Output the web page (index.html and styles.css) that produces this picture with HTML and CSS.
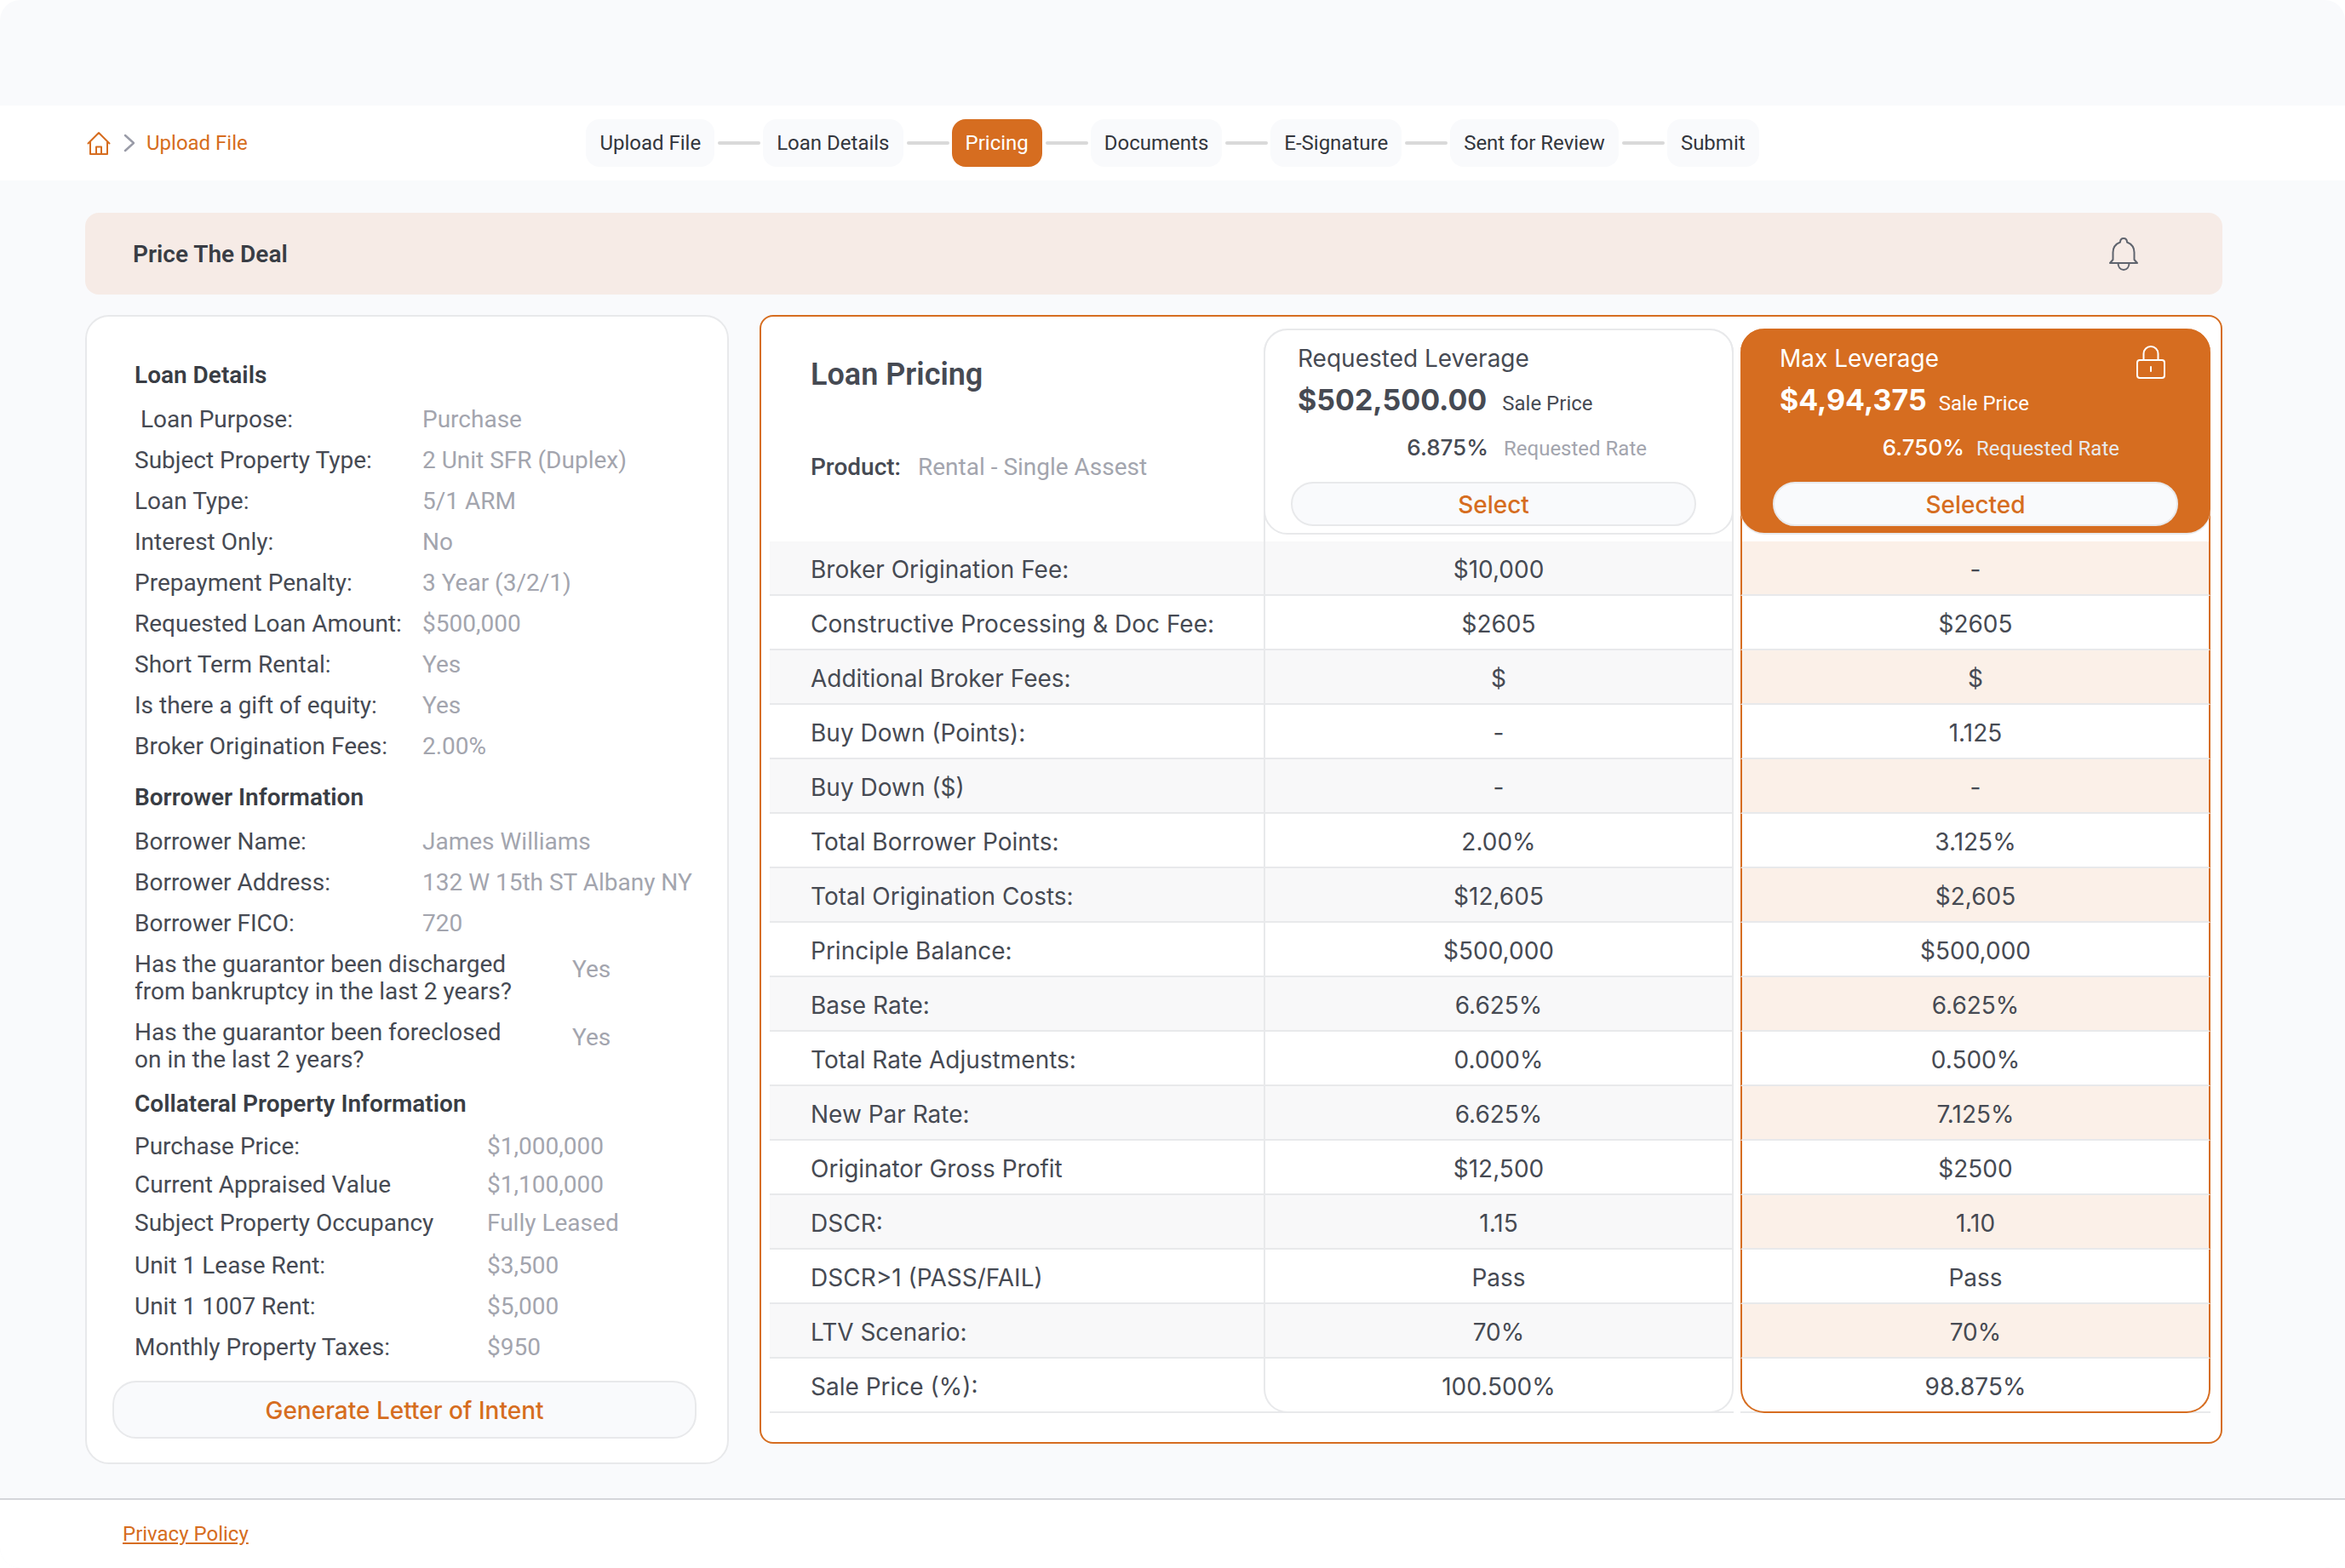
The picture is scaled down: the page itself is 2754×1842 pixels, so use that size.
FILE: index.html
```html
<!DOCTYPE html>
<html lang="en">
<head>
    <meta charset="UTF-8">
    <meta name="viewport" content="width=device-width, initial-scale=1.0">
    <title>Price The Deal</title>
    <link rel="stylesheet" href="styles.css">
</head>
<body>
    <div class="topbar"></div>

    <header class="header">
        <nav class="breadcrumb" aria-label="Breadcrumb">
            <a href="#" class="home" aria-label="Home">
                <svg width="28" height="28" viewBox="0 0 28 28" fill="none" stroke="currentColor" stroke-width="2" stroke-linecap="round" stroke-linejoin="round">
                    <path d="M1.5 14.5 14 2l12.500 12.500M4 12.500V27h20V12.500M11 27v-8.500h6V27"/>
                </svg>
            </a>
            <svg class="chevron" width="14" height="24" viewBox="0 0 14 24" fill="none" stroke="currentColor" stroke-width="2.500" stroke-linecap="round" stroke-linejoin="round">
                <path d="M3 3l10 9-10 9"/>
            </svg>
            <a href="#">Upload File</a>
        </nav>
        <ol class="steps">
            <li><button type="button">Upload File</button></li>
            <li><button type="button">Loan Details</button></li>
            <li><button type="button" class="active" aria-current="step">Pricing</button></li>
            <li><button type="button">Documents</button></li>
            <li><button type="button">E-Signature</button></li>
            <li><button type="button">Sent for Review</button></li>
            <li><button type="button">Submit</button></li>
        </ol>
    </header>

    <main class="content">
        <div class="banner">
            <h1>Price The Deal</h1>
            <button type="button" class="bell" aria-label="Notifications">
                <svg width="36" height="40" viewBox="0 0 36 40" fill="none" stroke="currentColor" stroke-width="2" stroke-linecap="round" stroke-linejoin="round">
                    <path d="M14 6.500C14 3.500 15.500 2 18 2s4 1.500 4 4.500c5 2 8.500 6 8.500 12V27l3.500 4H2l3.500-4v-8.500c0-6 3.500-10 8.500-12z"/>
                    <path d="M11.500 31c0 4.500 2.500 8 6.500 8s6.500-3.500 6.500-8"/>
                </svg>
            </button>
        </div>

        <div class="columns">
            <!-- Loan summary -->
            <aside class="summary">
                <section>
                    <h2>Loan Details</h2>
                    <dl>
                        <dt>&nbsp;Loan Purpose:</dt><dd>Purchase</dd>
                        <dt>Subject Property Type:</dt><dd>2 Unit SFR (Duplex)</dd>
                        <dt>Loan Type:</dt><dd>5/1 ARM</dd>
                        <dt>Interest Only:</dt><dd>No</dd>
                        <dt>Prepayment Penalty:</dt><dd>3 Year (3/2/1)</dd>
                        <dt>Requested Loan Amount:</dt><dd>$500,000</dd>
                        <dt>Short Term Rental:</dt><dd>Yes</dd>
                        <dt>Is there a gift of equity:</dt><dd>Yes</dd>
                        <dt>Broker Origination Fees:</dt><dd>2.00%</dd>
                    </dl>
                </section>
                <section>
                    <h2>Borrower Information</h2>
                    <dl>
                        <dt>Borrower Name:</dt><dd>James Williams</dd>
                        <dt>Borrower Address:</dt><dd>132 W 15th ST Albany NY</dd>
                        <dt>Borrower FICO:</dt><dd>720</dd>
                    </dl>
                    <dl class="questions">
                        <dt>Has the guarantor been discharged<br>from bankruptcy in the last 2 years?</dt><dd>Yes</dd>
                        <dt>Has the guarantor been foreclosed<br>on in the last 2 years?</dt><dd>Yes</dd>
                    </dl>
                </section>
                <section class="collateral">
                    <h2>Collateral Property Information</h2>
                    <dl class="property">
                        <dt>Purchase Price:</dt><dd>$1,000,000</dd>
                        <dt>Current Appraised Value</dt><dd>$1,100,000</dd>
                        <dt>Subject Property Occupancy</dt><dd>Fully Leased</dd>
                    </dl>
                    <dl class="rents">
                        <dt>Unit 1 Lease Rent:</dt><dd>$3,500</dd>
                        <dt>Unit 1 1007 Rent:</dt><dd>$5,000</dd>
                        <dt>Monthly Property Taxes:</dt><dd>$950</dd>
                    </dl>
                </section>
                <button type="button" class="pill generate">Generate Letter of Intent</button>
            </aside>

            <!-- Pricing comparison -->
            <section class="pricing">
                <table>
                    <colgroup>
                        <col>
                        <col class="col-offer">
                        <col class="col-gap">
                        <col class="col-offer">
                    </colgroup>
                    <thead>
                        <tr>
                            <td class="intro">
                                <h2>Loan Pricing</h2>
                                <p><strong>Product:</strong> <span>Rental - Single Assest</span></p>
                            </td>
                            <th scope="col" class="requested">
                                <div class="offer">
                                    <div class="offer-name">Requested Leverage</div>
                                    <div class="offer-price"><b>$502,500.00</b> <span>Sale Price</span></div>
                                    <div class="offer-rate"><b>6.875%</b> <span>Requested Rate</span></div>
                                    <button type="button" class="pill">Select</button>
                                </div>
                            </th>
                            <td></td>
                            <th scope="col" class="max">
                                <div class="offer selected">
                                    <svg class="lock" width="36" height="40" viewBox="0 0 36 40" fill="none" stroke="currentColor" stroke-width="2" stroke-linecap="round" stroke-linejoin="round">
                                        <rect x="2" y="17" width="32" height="21" rx="3"/>
                                        <path d="M9.500 17V9.500a8.500 8.500 0 0 1 17 0V17M18 25v5"/>
                                    </svg>
                                    <div class="offer-name">Max Leverage</div>
                                    <div class="offer-price"><b>$4,94,375</b> <span>Sale Price</span></div>
                                    <div class="offer-rate"><b>6.750%</b> <span>Requested Rate</span></div>
                                    <button type="button" class="pill">Selected</button>
                                </div>
                            </th>
                        </tr>
                    </thead>
                    <tbody>
                        <tr><th scope="row">Broker Origination Fee:</th><td class="requested">$10,000</td><td class="gap"></td><td class="max">-</td></tr>
                        <tr><th scope="row">Constructive Processing &amp; Doc Fee:</th><td class="requested">$2605</td><td class="gap"></td><td class="max">$2605</td></tr>
                        <tr><th scope="row">Additional Broker Fees:</th><td class="requested">$</td><td class="gap"></td><td class="max">$</td></tr>
                        <tr><th scope="row">Buy Down (Points):</th><td class="requested">-</td><td class="gap"></td><td class="max">1.125</td></tr>
                        <tr><th scope="row">Buy Down ($)</th><td class="requested">-</td><td class="gap"></td><td class="max">-</td></tr>
                        <tr><th scope="row">Total Borrower Points:</th><td class="requested">2.00%</td><td class="gap"></td><td class="max">3.125%</td></tr>
                        <tr><th scope="row">Total Origination Costs:</th><td class="requested">$12,605</td><td class="gap"></td><td class="max">$2,605</td></tr>
                        <tr><th scope="row">Principle Balance:</th><td class="requested">$500,000</td><td class="gap"></td><td class="max">$500,000</td></tr>
                        <tr><th scope="row">Base Rate:</th><td class="requested">6.625%</td><td class="gap"></td><td class="max">6.625%</td></tr>
                        <tr><th scope="row">Total Rate Adjustments:</th><td class="requested">0.000%</td><td class="gap"></td><td class="max">0.500%</td></tr>
                        <tr><th scope="row">New Par Rate:</th><td class="requested">6.625%</td><td class="gap"></td><td class="max">7.125%</td></tr>
                        <tr><th scope="row">Originator Gross Profit</th><td class="requested">$12,500</td><td class="gap"></td><td class="max">$2500</td></tr>
                        <tr><th scope="row">DSCR:</th><td class="requested">1.15</td><td class="gap"></td><td class="max">1.10</td></tr>
                        <tr><th scope="row">DSCR&gt;1 (PASS/FAIL)</th><td class="requested">Pass</td><td class="gap"></td><td class="max">Pass</td></tr>
                        <tr><th scope="row">LTV Scenario:</th><td class="requested">70%</td><td class="gap"></td><td class="max">70%</td></tr>
                        <tr><th scope="row">Sale Price (%):</th><td class="requested">100.500%</td><td class="gap"></td><td class="max">98.875%</td></tr>
                    </tbody>
                </table>
            </section>
        </div>
    </main>

    <footer class="footer">
        <a href="#">Privacy Policy</a>
    </footer>
</body>
</html>
```

FILE: styles.css
```css
:root {
    --orange: #d66d20;
    --ink: #464a53;
    --dark: #393d44;
    --muted: #a3a5ae;
    --line: #e8e9eb;
    --page: #f9fafc;
}
* {
    box-sizing: border-box;
}
html {
    background: #fff;
}
body {
    margin: 0;
    min-height: 100vh;
    display: flex;
    flex-direction: column;
    border-radius: 24px;
    background: var(--page);
    color: var(--ink);
    font-family: Roboto, Arial, sans-serif;
    font-size: 28px;
    line-height: 32px;
}
h1, h2, p, dl, dd, ol {
    margin: 0;
    padding: 0;
}
h1, h2 {
    font-size: 28px;
    font-weight: 600;
    color: var(--dark);
}
button {
    border: 0;
    padding: 0;
    background: none;
    color: inherit;
    font: inherit;
    cursor: pointer;
}
a {
    color: var(--orange);
}
svg {
    display: block;
}

/* Header */
.topbar {
    height: 124px;
}
.header {
    display: grid;
    grid-template-columns: 1fr auto 1fr;
    align-items: center;
    height: 88px;
    padding: 0 100px;
    background: #fff;
    font-size: 24px;
    line-height: 28px;
}
.breadcrumb {
    display: flex;
    align-items: center;
    gap: 14px;
    padding-left: 2px;
}
.breadcrumb a {
    text-decoration: none;
}
.chevron {
    color: #9a9ca8;
}
.steps {
    display: flex;
    list-style: none;
    color: #33363d;
}
.steps li {
    display: flex;
    align-items: center;
}
.steps li + li::before {
    content: "";
    width: 50px;
    height: 4px;
    margin: 0 3px 0 4px;
    border-radius: 2px;
    background: #d9d9d9;
}
.steps button {
    height: 56px;
    padding: 0 16px;
    border-radius: 16px;
    background: var(--page);
}
.steps .active {
    background: var(--orange);
    color: #fff;
}

/* Main area */
.content {
    flex: 1;
    padding: 38px 144px 40px 100px;
}
.banner {
    display: flex;
    justify-content: space-between;
    align-items: center;
    height: 96px;
    margin-bottom: 24px;
    padding: 0 98px 0 56px;
    border-radius: 16px;
    background: #f6ebe6;
}
.banner h1 {
    padding-top: 2px;
}
.bell {
    color: #5f646e;
}
.columns {
    display: grid;
    grid-template-columns: 756fr 1718fr;
    gap: 36px;
    align-items: start;
}

/* Loan summary */
.summary {
    padding: 53px 36px 28px 30px;
    border: 2px solid var(--line);
    border-radius: 28px;
    background: #fff;
}
.summary section {
    margin-bottom: 28px;
    padding-left: 26px;
}
.summary h2 {
    margin-bottom: 20px;
}
.summary dl {
    display: grid;
    grid-template-columns: 338px 1fr;
    row-gap: 16px;
}
.summary dt, .summary dd {
    white-space: nowrap;
}
.summary dd {
    color: var(--muted);
}
.summary .questions {
    grid-template-columns: 514px 1fr;
    margin-top: 16px;
}
.questions dd {
    padding-top: 6px;
}
.summary .collateral {
    margin-top: -8px;
    margin-bottom: 23px;
}
.collateral h2 {
    margin-bottom: 18px;
}
.collateral dl {
    grid-template-columns: 414px 1fr;
}
.summary .property {
    row-gap: 13px;
    margin-bottom: 18px;
}
.pill {
    display: block;
    width: 100%;
    height: 52px;
    padding-top: 2px;
    border: 2px solid var(--line);
    border-radius: 28px;
    background: var(--page);
    color: var(--orange);
    font-family: Inter, Roboto, sans-serif;
    font-size: 28px;
    font-weight: 500;
}
.generate {
    height: 68px;
}

/* Pricing comparison */
.pricing {
    padding: 14px 12px 34px 10px;
    border: 2px solid var(--orange);
    border-radius: 16px;
    background: #fff;
}
table {
    width: 100%;
    table-layout: fixed;
    isolation: isolate;
    border-collapse: separate;
    border-spacing: 0;
    font-family: Inter, Roboto, sans-serif;
    font-size: 28px;
    text-align: center;
}
.col-offer {
    width: 552px;
}
.col-gap {
    width: 8px;
}
th, td {
    padding: 0;
    font-weight: 400;
}
.intro {
    padding: 38px 0 0 48px;
    text-align: left;
    vertical-align: top;
    font-family: Roboto, Arial, sans-serif;
}
.intro h2 {
    margin-bottom: 77px;
    font-size: 36px;
    color: var(--ink);
}
.intro p {
    display: flex;
    gap: 20px;
}
.intro strong {
    font-weight: 500;
}
.intro span {
    color: var(--muted);
}
.requested, .max {
    border: 0 solid var(--line);
    border-width: 0 2px;
}
.max {
    border-color: var(--orange);
}
thead .requested, thead .max {
    padding-bottom: 8px;
    border-radius: 28px 28px 0 0;
}
.offer {
    position: relative;
    height: 242px;
    margin: 0 -2px;
    padding: 17px 42px 8px 30px;
    border: 2px solid var(--line);
    border-radius: 28px;
    text-align: left;
}
.offer > div {
    padding-left: 8px;
}
.offer span {
    font-family: Roboto, Arial, sans-serif;
    font-size: 24px;
}
.offer-name {
    margin-bottom: 17px;
}
.offer-price, .offer-rate {
    display: flex;
    align-items: baseline;
    gap: 18px;
}
.offer-price b {
    font-size: 34px;
}
.offer-rate {
    margin: 20px 0 23px;
}
.offer-rate b {
    width: 224px;
    font-size: 26px;
    font-weight: 500;
    text-align: right;
}
.offer-rate span {
    color: var(--muted);
}
.selected {
    height: 240px;
    margin-bottom: 2px;
    padding: 17px 36px 8px 36px;
    border-color: var(--orange);
    background: var(--orange);
    box-shadow: 0 2px 0 var(--line);
    color: #fff;
}
.selected .offer-price, .selected .offer-rate {
    gap: 14px;
}
.selected .offer-rate b {
    width: 217px;
}
.selected .offer-rate span {
    color: var(--line);
}
.lock {
    position: absolute;
    top: 18px;
    right: 50px;
}
tbody th, tbody td {
    height: 64px;
    padding-top: 4px;
}
tbody th, tbody .requested, tbody .max {
    border-bottom: 2px solid var(--line);
}
tbody th {
    padding-left: 48px;
    text-align: left;
}
tbody tr:nth-child(odd) th, tbody tr:nth-child(odd) .requested {
    background: #f8f8f9;
}
tbody tr:nth-child(odd) .max {
    background: #fbf0e8;
}
tbody tr:last-child .requested, tbody tr:last-child .max {
    position: relative;
    border-radius: 0 0 28px 28px;
}
tbody tr:last-child .max {
    border-bottom-color: var(--orange);
}
/* the bottom rule shows behind the rounded column ends */
tbody tr:last-child .requested::before, tbody tr:last-child .max::before {
    content: "";
    position: absolute;
    z-index: -1;
    left: -2px;
    right: -2px;
    bottom: -2px;
    height: 2px;
    background: var(--line);
}

/* Footer */
.footer {
    height: 82px;
    padding: 26px 144px;
    border-top: 2px solid #d5d6da;
    border-radius: 0 0 24px 24px;
    background: #fff;
    font-size: 24px;
    line-height: 28px;
}
```
